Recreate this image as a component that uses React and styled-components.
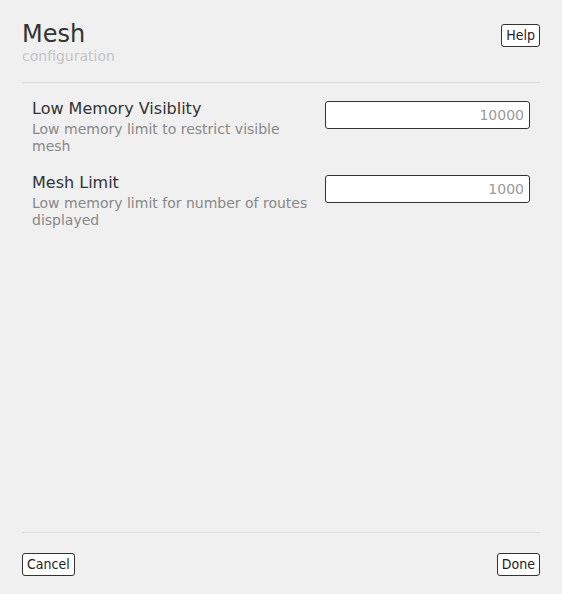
import styled, { createGlobalStyle } from "styled-components";

const Global = createGlobalStyle`
html, body {
    margin: 0;
    padding: 0;
    background: #f0f0f0;
}
body {
    font-family: "DejaVu Sans", sans-serif;
    color: #333;
}
`

const Page = styled.div`
display: flex;
flex-direction: column;
height: 100vh;
box-sizing: border-box;
padding: 20px 22px 18px;
`

const Header = styled.header`
display: flex;
justify-content: space-between;
align-items: flex-start;
padding-bottom: 18px;
border-bottom: 1px solid #dcdcdc;
`

const Title = styled.h1`
margin: 0;
font-size: 24px;
font-weight: normal;
line-height: 28px;
color: #333;
`

const Subtitle = styled.div`
font-size: 14px;
line-height: 16px;
color: #c4c4c4;
`

const Button = styled.button`
font-family: "DejaVu Sans", sans-serif;
font-stretch: condensed;
font-size: 14px;
color: #222;
background: #fff;
border: 1px solid #333;
border-radius: 3px;
padding: 3px 4px;
line-height: 15px;
margin-top: ${p => p.$top || 0}px;
cursor: pointer;
`

const Settings = styled.section`
flex: 1;
display: flex;
flex-direction: column;
gap: 18px;
padding: 16px 10px 0 10px;
`

const Row = styled.div`
display: flex;
align-items: flex-start;
gap: 12px;
`

const Info = styled.div`
flex: 1;
`

const Label = styled.div`
font-size: 16px;
line-height: 19px;
color: #333;
`

const Description = styled.div`
margin-top: 3px;
font-size: 14px;
line-height: 17px;
color: #888;
`

const Input = styled.input`
width: 205px;
height: 28px;
box-sizing: border-box;
margin-top: 2px;
border: 1px solid #333;
border-radius: 3px;
background: #fff;
padding: 0 5px;
text-align: right;
font-family: "DejaVu Sans", sans-serif;
font-size: 14px;
&::placeholder {
    color: #9a9a9a;
}
`

const Footer = styled.footer`
display: flex;
justify-content: space-between;
padding-top: 20px;
border-top: 1px solid #dcdcdc;
`

const settings = [
    { label: "Low Memory Visiblity", description: "Low memory limit to restrict visible mesh", placeholder: "10000" },
    { label: "Mesh Limit", description: "Low memory limit for number of routes displayed", placeholder: "1000" },
]

export default function App() {
    return (
        <>
            <Global />
            <Page>
                <Header>
                    <div>
                        <Title>Mesh</Title>
                        <Subtitle>configuration</Subtitle>
                    </div>
                    <Button $top={4}>Help</Button>
                </Header>
                <Settings>
                    {settings.map(s => (
                        <Row key={s.label}>
                            <Info>
                                <Label>{s.label}</Label>
                                <Description>{s.description}</Description>
                            </Info>
                            <Input placeholder={s.placeholder} />
                        </Row>
                    ))}
                </Settings>
                <Footer>
                    <Button>Cancel</Button>
                    <Button>Done</Button>
                </Footer>
            </Page>
        </>
    )
}
